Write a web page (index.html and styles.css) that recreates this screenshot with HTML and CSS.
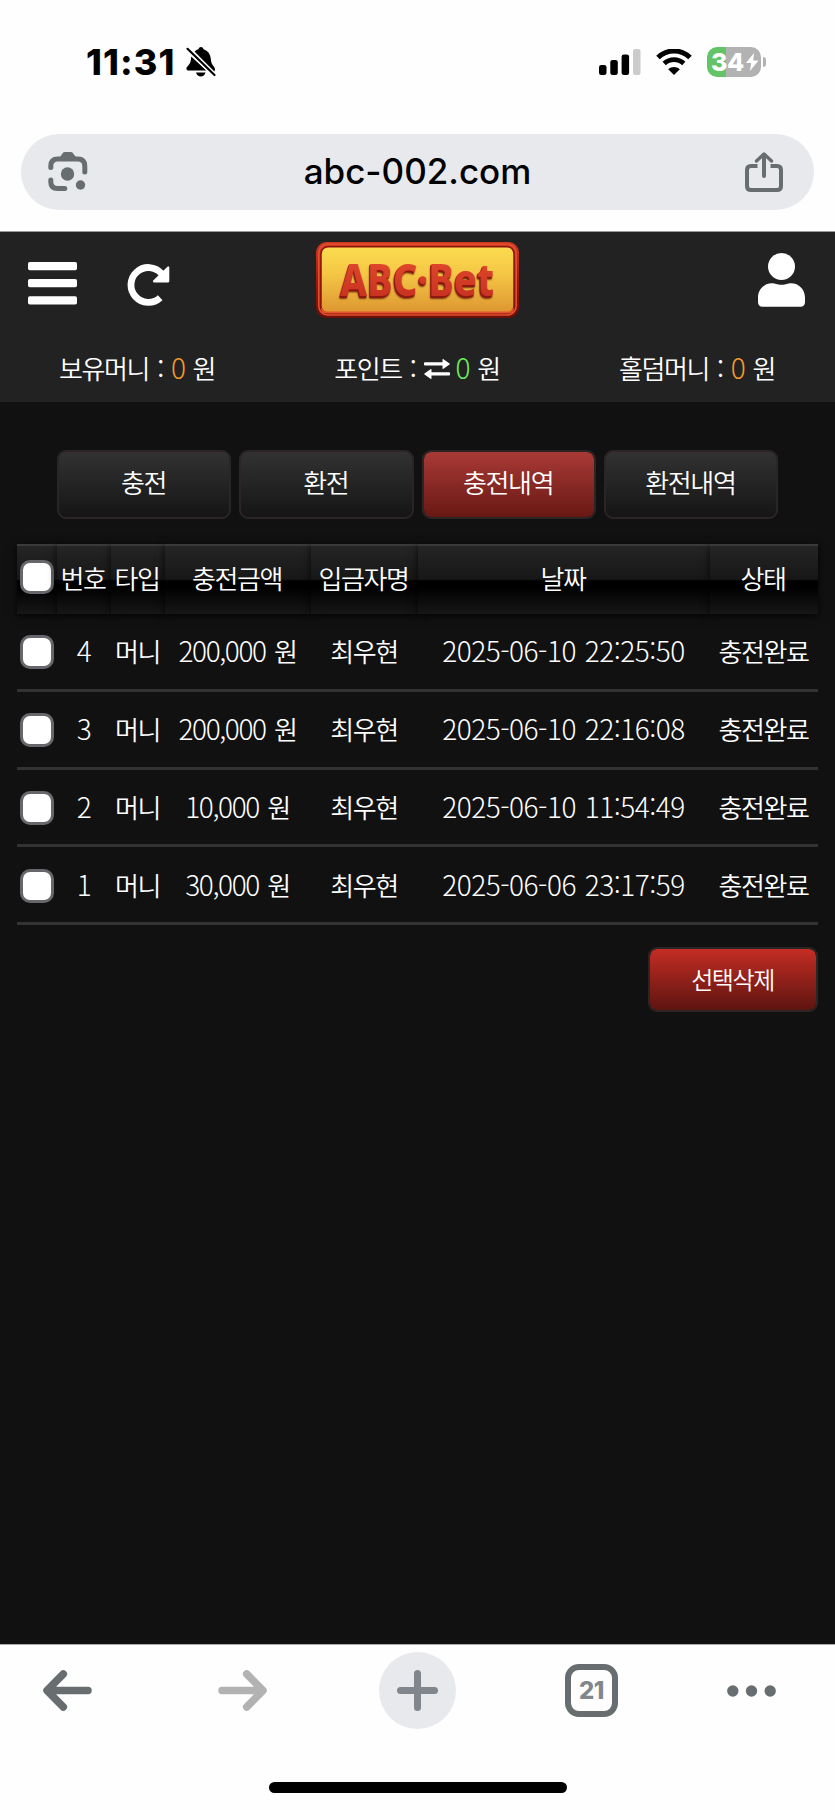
FILE: index.html
```html
<!DOCTYPE html>
<html lang="ko">
<head>
    <meta charset="UTF-8">
    <meta name="viewport" content="width=device-width, initial-scale=1.0">
    <title>ABC-Bet 충전내역</title>
    <link rel="stylesheet" href="styles.css">
</head>
<body>
    <!-- Status bar -->
    <div class="status-bar">
        <span class="time">11:31</span>
        <svg class="bell" width="32" height="32" viewBox="0 0 32 32">
            <path d="M9.5 5.5C11 4.200 12.200 3.600 13.500 3.200 13.800 1.700 14.800 1 16 1s2.200.7 2.500 2.200c4.500 1.400 7 5 7.300 9.800.3 4 1.300 5.500 3 7.500 1.600 1.900 1.600 4.500.2 5.200z" fill="#000"/>
            <path d="M6.200 10.500 21.500 24.500H3.800C1.300 24.500.8 22.300 2.200 20.700 4.800 18 6 16 6.200 10.500z" fill="#000"/>
            <path d="M11 26.500h9.500c-.8 2.800-2.400 4-4.700 4s-4-1.200-4.800-4z" fill="#000"/>
            <path d="M2.500 2.800 29.500 29" stroke="#fff" stroke-width="5"/>
            <path d="M2.500 2.800 29.500 29" stroke="#000" stroke-width="2.200" stroke-linecap="round"/>
        </svg>
        <svg class="signal" width="42" height="27" viewBox="0 0 42 27">
            <rect x="0" y="16" width="7.500" height="10" rx="2.300"/>
            <rect x="11.300" y="11" width="7.500" height="15" rx="2.300"/>
            <rect x="22.600" y="5.500" width="7.500" height="20.500" rx="2.300"/>
            <rect x="34" y="0" width="7.500" height="26" rx="2.300" fill="#cbcbcb"/>
        </svg>
        <svg class="wifi" width="36" height="27" viewBox="0 0 36 27">
            <path d="M2 8.500C11-.2 25-.2 34 8.500" fill="none" stroke="#000" stroke-width="5"/>
            <path d="M8.200 14.600c5.700-5.300 13.900-5.300 19.600 0" fill="none" stroke="#000" stroke-width="4.800"/>
            <path d="M12.200 20.200c3.600-3 8-3 11.600 0L18 26z"/>
        </svg>
        <div class="battery">
            <span class="level">34</span>
            <svg width="13" height="18" viewBox="0 0 13 18"><path d="M8 0 0 10h5.200L4 18l8.500-10.500H7.200z" fill="#fff"/></svg>
        </div>
        <span class="battery-tip"></span>
    </div>

    <!-- Address bar -->
    <div class="address-bar">
        <svg width="40" height="40" viewBox="0 0 40 40" fill="none" stroke="#686e70" stroke-width="5" stroke-linecap="round">
            <path d="M2.800 15.500V14c0-4.500 2.500-7 7-7h20c4.500 0 7 2.500 7 7v6"/>
            <path d="M2.800 28v2c0 4.500 2.500 6.500 7 6.500h7"/>
            <path d="M11 6.500 15 .8c.4-.6 1-.8 1.800-.8h6c.8 0 1.400.2 1.800.8l4.400 5.700z" fill="#686e70" stroke="none"/>
            <circle cx="19.500" cy="22" r="6.700" fill="#686e70" stroke="none"/>
            <circle cx="32.500" cy="33" r="4.700" fill="#686e70" stroke="none"/>
        </svg>
        <span class="url">abc-002.com</span>
        <svg width="38" height="40" viewBox="0 0 38 40" fill="none" stroke="#686e70" stroke-width="4" stroke-linejoin="round">
            <path d="M12.500 14H6c-2.500 0-4 1.500-4 4v16c0 2.500 1.500 4 4 4h26c2.500 0 4-1.500 4-4V18c0-2.500-1.500-4-4-4h-6.500"/>
            <path d="M19 24V3" stroke-linecap="round"/>
            <path d="M11.500 9 19 2l7.500 7" stroke-width="3.400" stroke-linecap="round"/>
        </svg>
    </div>

    <header class="header">
        <div class="header-top">
            <div class="header-left">
                <svg width="49" height="43" viewBox="0 0 49 43" fill="#fff">
                    <rect width="49" height="8.300" rx="1.800"/>
                    <rect y="17" width="49" height="8.300" rx="1.800"/>
                    <rect y="34.200" width="49" height="8.300" rx="1.800"/>
                </svg>
                <svg class="refresh" width="43" height="43" viewBox="0 0 43 43">
                    <path d="M34.500 9.500A17.400 17.400 0 1 0 33.200 33.700" fill="none" stroke="#fff" stroke-width="6.800"/>
                    <path d="M41.200 3.500v13.800H27z" fill="#fff" stroke="#fff" stroke-width="2.200" stroke-linejoin="round"/>
                </svg>
            </div>
            <svg class="logo" width="203" height="76" viewBox="0 0 203 76">
                <defs>
                    <linearGradient id="gold" x1="0" y1="0" x2="0" y2="1">
                        <stop offset="0" stop-color="#fbdc50"/>
                        <stop offset="0.400" stop-color="#f5c745"/>
                        <stop offset="1" stop-color="#dd9531"/>
                    </linearGradient>
                    <linearGradient id="frame" x1="0" y1="0" x2="0" y2="1">
                        <stop offset="0" stop-color="#d23a22"/>
                        <stop offset="0.500" stop-color="#9d1b12"/>
                        <stop offset="1" stop-color="#6c0d08"/>
                    </linearGradient>
                    <linearGradient id="letters" x1="0" y1="0" x2="0" y2="1">
                        <stop offset="0" stop-color="#e8502f"/>
                        <stop offset="1" stop-color="#c02a1d"/>
                    </linearGradient>
                </defs>
                <rect x="0" y="0" width="203" height="76" rx="11" fill="url(#frame)"/>
                <rect x="2.800" y="2.300" width="197.400" height="70.700" rx="9" fill="none" stroke="#e2512f" stroke-width="1.600"/>
                <rect x="5" y="4.700" width="193" height="66.500" rx="7" fill="url(#gold)" stroke="#8c150e" stroke-width="1.500"/>
                <path d="M6 66c0 3 2 4.500 5 4.500h181c3 0 5-1.500 5-4.500" fill="none" stroke="#e5502c" stroke-width="2"/>
                <text class="logo-text" x="24" y="54" textLength="154" lengthAdjust="spacingAndGlyphs" fill="url(#letters)">ABC·Bet</text>
            </svg>
            <svg class="user" width="47" height="54" viewBox="0 0 47 54" fill="#fff">
                <circle cx="23.500" cy="13.500" r="13.500"/>
                <path d="M14 30.200c3.500 0 4.500 1.600 9.500 1.600s6-1.600 9.500-1.600c8 0 14 6.300 14 14.300V49c0 3-1.600 4.700-4.600 4.700H4.600C1.600 53.700 0 52 0 49v-4.500c0-8 6-14.300 14-14.300z"/>
            </svg>
        </div>
        <div class="balances">
            <div>보유머니 : <em class="orange">0</em> 원</div>
            <div>포인트 :
                <svg class="swap" width="26" height="20" viewBox="0 0 26 20" fill="#fff">
                    <path d="M1 3.300h17.500V.5c0-.5.6-.7 1-.3l6 4.300c.4.300.4.700 0 1l-6 4.300c-.4.300-1 .1-1-.4V6.600H1c-.6 0-1-.3-1-.8V4.100c0-.5.4-.8 1-.8z"/>
                    <path d="M25 13.300H7.500v-2.800c0-.5-.6-.7-1-.3l-6 4.300c-.4.300-.4.700 0 1l6 4.300c.4.300 1 .1 1-.4v-2.800H25c.6 0 1-.3 1-.8v-1.700c0-.5-.4-.8-1-.8z"/>
                </svg>
                <em class="green">0</em> 원</div>
            <div>홀덤머니 : <em class="orange">0</em> 원</div>
        </div>
    </header>

    <main class="content">
        <nav class="tabs">
            <button type="button" class="tab">충전</button>
            <button type="button" class="tab">환전</button>
            <button type="button" class="tab active">충전내역</button>
            <button type="button" class="tab">환전내역</button>
        </nav>

        <table class="history">
            <colgroup>
                <col class="col-check">
                <col class="col-no">
                <col class="col-type">
                <col class="col-amount">
                <col class="col-name">
                <col class="col-date">
                <col class="col-status">
            </colgroup>
            <thead>
                <tr>
                    <th><input type="checkbox"></th>
                    <th>번호</th>
                    <th>타입</th>
                    <th>충전금액</th>
                    <th>입금자명</th>
                    <th>날짜</th>
                    <th>상태</th>
                </tr>
            </thead>
            <tbody>
                <tr>
                    <td><input type="checkbox"></td>
                    <td><span class="num">4</span></td>
                    <td>머니</td>
                    <td><span class="num">200,000</span> 원</td>
                    <td>최우현</td>
                    <td><span class="num date">2025-06-10 22:25:50</span></td>
                    <td>충전완료</td>
                </tr>
                <tr>
                    <td><input type="checkbox"></td>
                    <td><span class="num">3</span></td>
                    <td>머니</td>
                    <td><span class="num">200,000</span> 원</td>
                    <td>최우현</td>
                    <td><span class="num date">2025-06-10 22:16:08</span></td>
                    <td>충전완료</td>
                </tr>
                <tr>
                    <td><input type="checkbox"></td>
                    <td><span class="num">2</span></td>
                    <td>머니</td>
                    <td><span class="num">10,000</span> 원</td>
                    <td>최우현</td>
                    <td><span class="num date">2025-06-10 11:54:49</span></td>
                    <td>충전완료</td>
                </tr>
                <tr>
                    <td><input type="checkbox"></td>
                    <td><span class="num">1</span></td>
                    <td>머니</td>
                    <td><span class="num">30,000</span> 원</td>
                    <td>최우현</td>
                    <td><span class="num date">2025-06-06 23:17:59</span></td>
                    <td>충전완료</td>
                </tr>
            </tbody>
        </table>

        <div class="actions">
            <button type="button" class="delete-btn">선택삭제</button>
        </div>
    </main>

    <!-- Browser toolbar -->
    <footer class="toolbar">
        <div class="toolbar-icons">
            <svg width="49" height="41" viewBox="0 0 49 41" fill="none" stroke="#686e70" stroke-width="7.500" stroke-linecap="round" stroke-linejoin="round">
                <path d="M45 20.500H6M20.300 4 4 20.500 20.300 37"/>
            </svg>
            <svg width="49" height="41" viewBox="0 0 49 41" fill="none" stroke="#b2b2b2" stroke-width="7.500" stroke-linecap="round" stroke-linejoin="round">
                <path d="M4 20.500h39M28.700 4 45 20.500 28.700 37"/>
            </svg>
            <div class="new-tab">
                <svg width="41" height="41" viewBox="0 0 41 41" stroke="#80868b" stroke-width="7" stroke-linecap="round">
                    <path d="M20.500 3.500v34M3.500 20.500h34"/>
                </svg>
            </div>
            <div class="tab-count">21</div>
            <svg width="49" height="12" viewBox="0 0 49 12" fill="#686e70">
                <circle cx="5.800" cy="6" r="5.700"/>
                <circle cx="24.500" cy="6" r="5.700"/>
                <circle cx="43.200" cy="6" r="5.700"/>
            </svg>
        </div>
        <div class="home-indicator"></div>
    </footer>
</body>
</html>
```
FILE: styles.css
```css
* {
    box-sizing: border-box;
}

body {
    margin: 0;
    width: 835px;
    height: 1810px;
    display: flex;
    flex-direction: column;
    background-color: #fefefe;
    color: #fff;
    font-family: "Noto Sans CJK KR", sans-serif;
    font-weight: 350;
    font-size: 26px;
    letter-spacing: -1.4px;
    overflow: hidden;
}

svg {
    display: block;
    flex: none;
}

/* Status bar */
.status-bar {
    height: 134px;
    padding: 0 69px 10px 86px;
    display: flex;
    align-items: center;
    color: #000;
    font-family: Inter, sans-serif;
    letter-spacing: 0;
}

.time {
    font-size: 36px;
    font-weight: 800;
    width: 99px;
    letter-spacing: 1.1px;
}

.signal {
    margin-left: auto;
    margin-right: 15px;
}

.wifi {
    margin-right: 15px;
}

.battery {
    width: 54px;
    height: 30px;
    border-radius: 10px;
    background: linear-gradient(to right, #62c466 19px, #b2b2b2 19px);
    display: flex;
    align-items: center;
    padding-left: 4px;
}

.level {
    color: #fff;
    font-size: 25px;
    font-weight: 800;
    letter-spacing: -0.5px;
    width: 35px;
}

.battery-tip {
    width: 3px;
    height: 10px;
    margin-left: 2px;
    border-radius: 0 5px 5px 0;
    background-color: #b2b2b2;
}

/* Address bar */
.address-bar {
    height: 76px;
    margin: 0 21px 21px;
    padding: 0 31px 0 27px;
    border-radius: 38px;
    background-color: #e7e9ed;
    display: flex;
    align-items: center;
    justify-content: space-between;
}

.url {
    color: #000;
    font-family: Inter, sans-serif;
    font-size: 35px;
    font-weight: 550;
    letter-spacing: 0;
    padding: 0 0 2px 2px;
}

/* Site header */
.header {
    height: 171px;
    background-color: #222;
    border-top: 1px solid #999;
}

.header-top {
    height: 108px;
    padding: 10px 29px 0 28px;
    display: grid;
    grid-template-columns: 1fr 203px 1fr;
    align-items: start;
}

.header-left {
    display: flex;
    padding-top: 20px;
}

.refresh {
    margin: 2px 0 0 50px;
}

.user {
    justify-self: end;
    margin: 11px 1px 0 0;
}

.logo-text {
    font-family: "Noto Sans", sans-serif;
    font-size: 44px;
    font-weight: 800;
    letter-spacing: 0;
    text-shadow: -1px 1px 0 #8e180f, -1px 2px 0 #8e180f, -1px 3px 2px rgba(90, 20, 0, 0.8);
}

.balances {
    padding: 9px 60px 0 59px;
    line-height: 38px;
    word-spacing: 2.2px;
    display: flex;
    justify-content: space-between;
}

.balances em {
    font-style: normal;
    font-size: 28px;
    font-weight: 300;
    line-height: 1;
}

.swap {
    display: inline-block;
    margin-right: -2px;
}

.orange {
    color: #f39a2b;
}

.green {
    color: #6cf05a;
}

/* Content */
.content {
    flex: 1;
    background-color: #111;
    padding: 48px 17px 0;
}

.tabs {
    display: flex;
    gap: 8px;
    padding: 0 40px;
    margin-bottom: 25px;
}

.tab,
.delete-btn {
    font: inherit;
    letter-spacing: inherit;
    color: #fff;
    border: 2px solid #2c2526;
    border-radius: 9px;
    cursor: pointer;
}

.tab {
    flex: 1;
    height: 69px;
    padding: 0 1px 6px 0;
    background: linear-gradient(#323232, #151515);
}

.tab.active {
    background: linear-gradient(#a93a36, #681814) padding-box;
}

.history {
    width: 801px;
    table-layout: fixed;
    border-collapse: separate;
    border-spacing: 0;
    text-align: center;
}

.col-check { width: 40px; }
.col-no { width: 54px; }
.col-type { width: 54px; }
.col-amount { width: 146px; }
.col-name { width: 107px; }
.col-date { width: 292px; }
.col-status { width: 108px; }

.history th {
    height: 70px;
    padding: 0 2px 6px 0;
    font-weight: 350;
    white-space: nowrap;
    border-top: 2px solid #3a3a3a;
    background: linear-gradient(#252525, #171717 49%, #000 51%, #000 60%, #171717);
    box-shadow: 0 2px 8px rgba(0, 0, 0, 0.8);
}

.history td {
    height: 77.8px;
    padding: 0 1px 0 0;
    line-height: 38px;
    white-space: nowrap;
    border-bottom: 3px solid #333;
    word-spacing: 2.5px;
}

.history .num {
    font-size: 28px;
    font-weight: 300;
    line-height: 1;
}

.history .date {
    letter-spacing: -0.5px;
    word-spacing: 1.5px;
}

.history input {
    appearance: none;
    display: block;
    width: 34px;
    height: 34px;
    margin: 0 0 0 3px;
    border: 3px solid #67666b;
    border-radius: 10px;
    background-color: #fff;
}

.history td input {
    margin-top: 2px;
}

.actions {
    display: flex;
    justify-content: flex-end;
    margin-top: 22px;
}

.delete-btn {
    width: 170px;
    height: 65px;
    padding: 0 1px 2px 0;
    font-size: 24px;
    background: linear-gradient(#c42d24, #5e1410) padding-box;
}

/* Browser toolbar */
.toolbar {
    height: 166px;
    padding-top: 7px;
    border-top: 1px solid #aaa;
    background-color: #fefefe;
}

.toolbar-icons {
    height: 77px;
    display: grid;
    grid-template-columns: 135px 215px 135px 213px 107px;
    align-items: center;
    justify-items: center;
}

.new-tab {
    width: 77px;
    height: 77px;
    border-radius: 50%;
    background-color: #e7e9ed;
    display: flex;
    align-items: center;
    justify-content: center;
}

.tab-count {
    width: 53px;
    height: 53px;
    border: 6px solid #686e70;
    border-radius: 14px;
    color: #80868b;
    font-family: Inter, sans-serif;
    font-size: 24px;
    font-weight: 800;
    line-height: 42px;
    text-align: center;
    letter-spacing: -0.5px;
}

.home-indicator {
    width: 298px;
    height: 11px;
    margin: 53px auto 0;
    border-radius: 6px;
    background-color: #000;
}
```
